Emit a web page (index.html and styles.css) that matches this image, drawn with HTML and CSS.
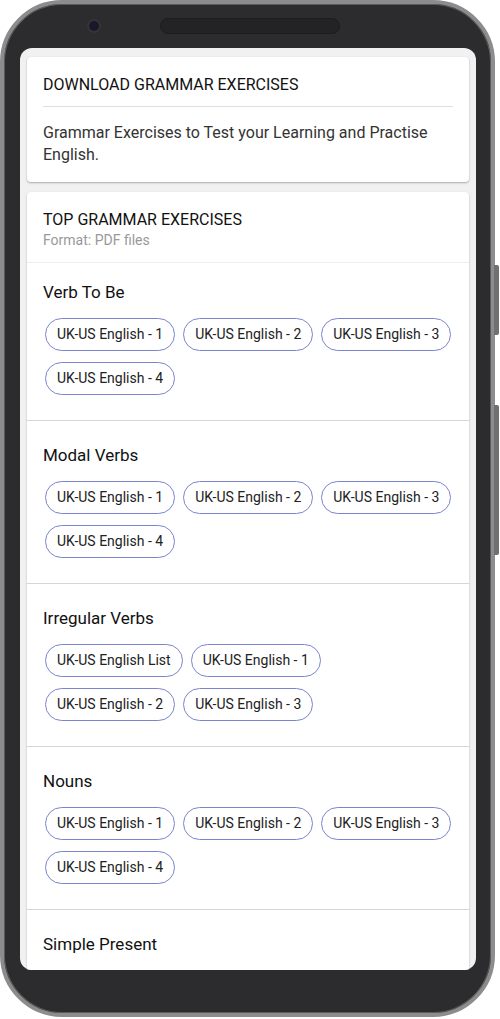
FILE: index.html
```html
<!DOCTYPE html>
<html lang="en">
<head>
    <meta charset="UTF-8">
    <meta name="viewport" content="width=device-width, initial-scale=1.0">
    <title>Grammar Exercises</title>
    <link rel="stylesheet" href="styles.css">
</head>
<body>
    <div class="phone">
        <span class="side-btn side-btn-top"></span>
        <span class="side-btn side-btn-long"></span>
        <div class="phone-top">
            <span class="camera"></span>
            <span class="speaker"></span>
        </div>
        <div class="screen">
            <div class="card">
                <div class="card-intro">
                    <h1 class="card-title">DOWNLOAD GRAMMAR EXERCISES</h1>
                    <p class="intro-text">Grammar Exercises to Test your Learning and Practise English.</p>
                </div>
            </div>

            <div class="card">
                <div class="card-header">
                    <h2 class="card-title">TOP GRAMMAR EXERCISES</h2>
                    <div class="card-sub">Format: PDF files</div>
                </div>

                <div class="section">
                    <h3 class="section-title">Verb To Be</h3>
                    <div class="chips">
                        <a class="chip" href="#">UK-US English - 1</a>
                        <a class="chip" href="#">UK-US English - 2</a>
                        <a class="chip" href="#">UK-US English - 3</a>
                        <a class="chip" href="#">UK-US English - 4</a>
                    </div>
                </div>

                <div class="section">
                    <h3 class="section-title">Modal Verbs</h3>
                    <div class="chips">
                        <a class="chip" href="#">UK-US English - 1</a>
                        <a class="chip" href="#">UK-US English - 2</a>
                        <a class="chip" href="#">UK-US English - 3</a>
                        <a class="chip" href="#">UK-US English - 4</a>
                    </div>
                </div>

                <div class="section">
                    <h3 class="section-title">Irregular Verbs</h3>
                    <div class="chips">
                        <a class="chip" href="#">UK-US English List</a>
                        <a class="chip" href="#">UK-US English - 1</a>
                        <a class="chip" href="#">UK-US English - 2</a>
                        <a class="chip" href="#">UK-US English - 3</a>
                    </div>
                </div>

                <div class="section">
                    <h3 class="section-title">Nouns</h3>
                    <div class="chips">
                        <a class="chip" href="#">UK-US English - 1</a>
                        <a class="chip" href="#">UK-US English - 2</a>
                        <a class="chip" href="#">UK-US English - 3</a>
                        <a class="chip" href="#">UK-US English - 4</a>
                    </div>
                </div>

                <div class="section">
                    <h3 class="section-title">Simple Present</h3>
                    <div class="chips">
                        <a class="chip" href="#">UK-US English - 1</a>
                        <a class="chip" href="#">UK-US English - 2</a>
                        <a class="chip" href="#">UK-US English - 3</a>
                        <a class="chip" href="#">UK-US English - 4</a>
                    </div>
                </div>
            </div>
        </div>
    </div>
</body>
</html>
```

FILE: styles.css
```css
* {
    box-sizing: border-box;
}
body {
    margin: 0;
    padding: 0;
    background: #fff;
    font-family: Roboto, "Noto Sans", Arial, sans-serif;
    color: #222;
    overflow: hidden;
}

/* device frame */
.phone {
    position: relative;
    width: 495px;
    height: 1017px;
    display: flex;
    flex-direction: column;
    padding: 0 15px 43px 16px;
    background: #2c2b2e;
    border: 4px solid #8c8c8c;
    border-radius: 62px;
    box-shadow: inset 0 0 0 1px #5a5a5a;
}
.side-btn {
    position: absolute;
    right: -8px;
    width: 5px;
    background: #707070;
    border-radius: 0 2px 2px 0;
}
.side-btn-top {
    top: 261px;
    height: 70px;
}
.side-btn-long {
    top: 401px;
    height: 150px;
}
.phone-top {
    height: 44px;
    display: flex;
    align-items: center;
    padding-left: 67px;
    gap: 59px;
}
.camera {
    width: 14px;
    height: 14px;
    border-radius: 50%;
    background: #1c1629;
    border: 2px solid #353438;
}
.speaker {
    width: 180px;
    height: 16px;
    border-radius: 8px;
    background: #232225;
    border: 1px solid #1d1c1f;
}
.screen {
    flex: 1;
    overflow: hidden;
    background: #f1f1f1;
    border-radius: 12px;
    padding: 9px 7px;
}

/* cards */
.card {
    background: #fff;
    border-radius: 4px;
    box-shadow: 0 1px 2px rgba(0, 0, 0, 0.3);
    margin-bottom: 10px;
}
.card-intro {
    padding: 18px 16px 16px;
}
.card-title {
    margin: 0;
    font-size: 16px;
    line-height: 20px;
    font-weight: 400;
    color: #111;
}
.card-intro .card-title {
    padding-bottom: 11px;
    border-bottom: 1px solid #ddd;
}
.intro-text {
    margin: 15px 0 0;
    font-size: 16px;
    line-height: 22px;
    color: #333;
}
.card-header {
    padding: 18px 16px 12px;
    border-bottom: 1px solid #eee;
}
.card-sub {
    margin-top: 1px;
    font-size: 14px;
    line-height: 19px;
    color: #999;
}

/* exercise groups */
.section {
    padding: 17px 16px 25px;
    border-bottom: 1px solid #d6d6d6;
}
.section + .section {
    padding-top: 22px;
}
.section-title {
    margin: 0;
    font-size: 17px;
    line-height: 24px;
    font-weight: 400;
    color: #111;
}
.chips {
    display: flex;
    flex-wrap: wrap;
    gap: 11px 8px;
    margin-top: 14px;
    padding-left: 2px;
}
.chip {
    display: inline-block;
    padding: 6px 11px;
    font-size: 14px;
    line-height: 19px;
    color: #222;
    text-decoration: none;
    border: 1px solid #7b84cf;
    border-radius: 17px;
}
```
